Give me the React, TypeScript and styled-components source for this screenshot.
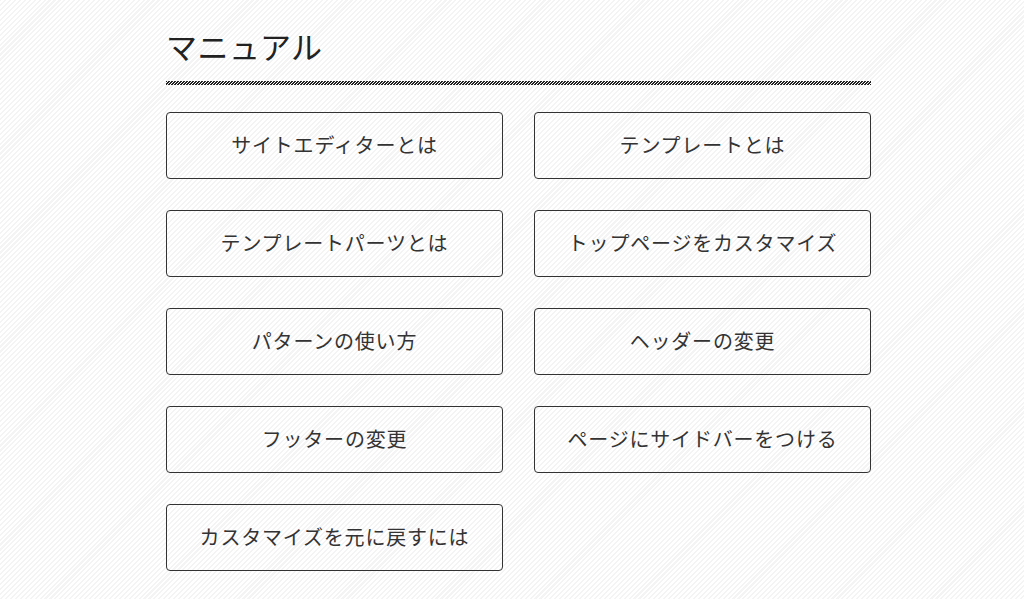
import React from 'react'
import styled, { createGlobalStyle } from 'styled-components'

const GlobalStyle = createGlobalStyle`
  html, body {
    margin: 0;
    padding: 0;
  }
  body {
    font-family: "Noto Sans CJK JP", "Noto Sans", sans-serif;
    color: #333;
    background: repeating-linear-gradient(-45deg, #ffffff 0 2px, #f4f4f4 2px 3.5px);
    min-height: 599px;
  }
`;

const Page = styled.main`
  width: 705px;
  margin-left: 166px;
  padding-top: 24px;
`;

const Title = styled.h2`
  margin: 0;
  font-size: 31px;
  font-weight: 400;
  line-height: 44px;
  letter-spacing: 0.5px;
  color: #222;
`;

const TitleRule = styled.div`
  height: 4px;
  margin-top: 13px;
  background-image: linear-gradient(
    135deg,
    #222 25%,
    transparent 25% 50%,
    #222 50% 75%,
    transparent 75%
  );
  background-size: 3px 3px;
`;

const Grid = styled.div`
  display: grid;
  grid-template-columns: 1fr 1fr;
  column-gap: 31px;
  row-gap: 31px;
  margin-top: 27px;
`;

const LinkButton = styled.a`
  display: flex;
  align-items: center;
  justify-content: center;
  box-sizing: border-box;
  height: 67px;
  padding-bottom: 2px;
  border: 1px solid #333;
  border-radius: 4px;
  font-size: 20px;
  letter-spacing: 0.8px;
  color: #333;
  text-decoration: none;
  background: transparent;
`;

const items = [
  'サイトエディターとは',
  'テンプレートとは',
  'テンプレートパーツとは',
  'トップページをカスタマイズ',
  'パターンの使い方',
  'ヘッダーの変更',
  'フッターの変更',
  'ページにサイドバーをつける',
  'カスタマイズを元に戻すには',
];

export default function App() {
  return (
    <>
      <GlobalStyle />
      <Page>
        <Title>マニュアル</Title>
        <TitleRule />
        <Grid>
          {items.map((label) => (
            <LinkButton key={label} href="#">{label}</LinkButton>
          ))}
        </Grid>
      </Page>
    </>
  )
}
